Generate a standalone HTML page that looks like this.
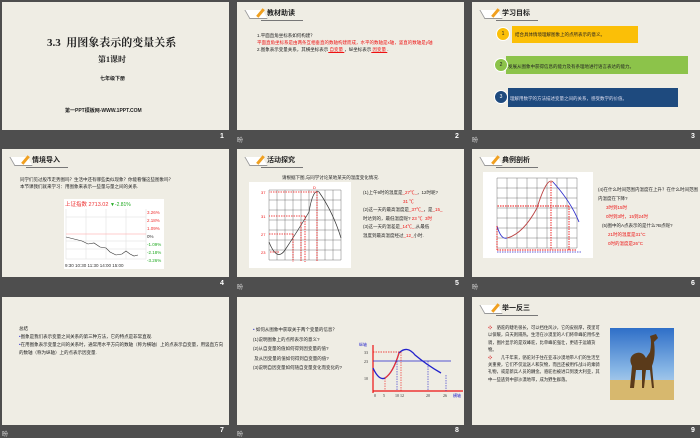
<!DOCTYPE html>
<html><head><meta charset="utf-8"><style>
*{margin:0;padding:0;box-sizing:border-box}
body{width:700px;height:438px;background:#4e4e4e;position:relative;overflow:hidden;font-family:"Liberation Sans","Noto Sans CJK SC",sans-serif;color:#222}
.s{position:absolute;width:227px;height:128px;background:#efede4;overflow:hidden}
.n{position:absolute;color:#fff;font-size:7px;font-weight:bold}
.ic{position:absolute;color:#ddd;font-size:6px}
.hd{position:absolute;left:10px;top:5px;height:14px;width:60px}
.hd .b{position:absolute;left:0;top:3px;width:18px;height:9px;border-left:1px solid #999;border-bottom:1px solid #999;transform:skewX(30deg);background:#fff}
.hd .p{position:absolute;left:12px;top:1px;width:3px;height:10px;background:#f0a020;transform:rotate(40deg)}
.hd .t{position:absolute;left:20px;top:1px;font-size:7px;font-weight:bold;color:#222}
.hd .u{position:absolute;left:14px;top:13px;width:42px;height:1px;background:#777}
.tx{position:absolute;font-size:4.5px;line-height:7px;color:#222}
.r{color:#e11}
</style></head><body>

<!-- Slide 1 -->
<div class="s" style="left:2px;top:2px">
<div style="position:absolute;left:45px;top:32px;font-size:11px;font-weight:bold;font-family:'Liberation Serif','Noto Serif CJK SC',serif">3.3&nbsp; 用图象表示的变量关系</div>
<div style="position:absolute;left:96px;top:52px;font-size:8px;font-weight:bold;font-family:'Liberation Serif','Noto Serif CJK SC',serif">第1课时</div>
<div style="position:absolute;left:98px;top:73px;font-size:5px;font-weight:bold">七年级下册</div>
<div style="position:absolute;left:63px;top:105px;font-size:5px;font-weight:bold">第一PPT模板网-WWW.1PPT.COM</div>
</div>
<div class="n" style="left:220px;top:133px">1</div>

<!-- Slide 2 -->
<div class="s" style="left:237px;top:2px">
<div class="hd"><div class="b"></div><div class="p"></div><div class="t">教材助读</div><div class="u"></div></div>
<div class="tx" style="left:20px;top:30px;width:200px">1.平面直角坐标系如何构建？<br><span class="r">平面直角坐标系是由两条互相垂直的数轴构建而成，水平的数轴是x轴，竖直的数轴是y轴</span><br>2.图象表示变量关系，其横坐标表示<span class="r" style="text-decoration:underline">&nbsp;自变量&nbsp;</span>，纵坐标表示<span class="r" style="text-decoration:underline">&nbsp;因变量&nbsp;</span>.</div>
</div>
<div class="ic" style="left:237px;top:135px">昐</div>
<div class="n" style="left:455px;top:133px">2</div>

<!-- Slide 3 -->
<div class="s" style="left:472px;top:2px;width:228px">
<div class="hd"><div class="b"></div><div class="p"></div><div class="t">学习目标</div><div class="u"></div></div>
<div style="position:absolute;left:40px;top:24px;width:126px;height:17px;background:#fbbf07"></div>
<div style="position:absolute;left:24px;top:25px;width:14px;height:14px;border-radius:50%;background:#fbbf07;border:1px solid #fff;font-size:5px;text-align:center;line-height:12px">1</div>
<div class="tx" style="left:43px;top:29px">结合具体情境理解图象上的点所表示的意义。</div>
<div style="position:absolute;left:34px;top:54px;width:182px;height:18px;background:#8cc34a"></div>
<div style="position:absolute;left:22px;top:56px;width:14px;height:14px;border-radius:50%;background:#8cc34a;border:1px solid #fff;font-size:5px;text-align:center;line-height:12px">2</div>
<div class="tx" style="left:36px;top:61px">发展从图象中获得信息的能力及有条理地进行语言表达的能力。</div>
<div style="position:absolute;left:36px;top:86px;width:170px;height:19px;background:#1e4a7e"></div>
<div style="position:absolute;left:22px;top:88px;width:14px;height:14px;border-radius:50%;background:#1e4a7e;border:1px solid #fff;font-size:5px;text-align:center;line-height:12px;color:#fff">3</div>
<div class="tx" style="left:38px;top:93px;color:#dde">理解用数学的方法描述变量之间的关系，感受数学的价值。</div>
</div>
<div class="ic" style="left:472px;top:135px">昐</div>
<div class="n" style="left:691px;top:133px">3</div>

<!-- Slide 4 -->
<div class="s" style="left:2px;top:149px">
<div class="hd"><div class="b"></div><div class="p"></div><div class="t">情境导入</div><div class="u"></div></div>
<div class="tx" style="left:18px;top:27px;width:205px">同学们见过股市走势图吗？生活中还有哪些类似现象？你能看懂这些图象吗？<br>本节课我们就来学习：用图象来表示一些量与量之间的关系.</div>
<div style="position:absolute;left:62px;top:50px;width:100px;height:70px;background:#fff"></div>
<div style="position:absolute;left:63px;top:51px;font-size:5.5px;color:#e33">上证指数 2713.02 <span style="color:#2a2;font-size:5px">▼-2.81%</span></div>
<svg style="position:absolute;left:62px;top:58px" width="100" height="62">
<g stroke="#ddd" stroke-width=".5"><line x1="2" y1="2" x2="2" y2="52"/><line x1="22" y1="2" x2="22" y2="52"/><line x1="42" y1="2" x2="42" y2="52"/><line x1="62" y1="2" x2="62" y2="52"/><line x1="82" y1="2" x2="82" y2="52"/><line x1="2" y1="52" x2="82" y2="52"/><line x1="2" y1="10" x2="82" y2="10"/><line x1="2" y1="34" x2="82" y2="34"/><line x1="2" y1="42" x2="82" y2="42"/></g>
<line x1="2" y1="27" x2="82" y2="27" stroke="#f99" stroke-width=".6"/>
<polyline fill="none" stroke="#333" stroke-width=".6" points="2,30 10,32 18,34 24,37 30,36 36,40 42,41 46,45 52,48 58,47 62,44 66,47 70,49 74,48"/>
<g font-size="4.5" font-family="Liberation Sans"><text x="83" y="7" fill="#e33">3.26%</text><text x="83" y="15" fill="#e33">2.18%</text><text x="83" y="23" fill="#e33">1.09%</text><text x="83" y="31" fill="#333">0%</text><text x="83" y="39" fill="#2a2">-1.09%</text><text x="83" y="47" fill="#2a2">-2.18%</text><text x="83" y="55" fill="#2a2">-3.26%</text><text x="1" y="60" fill="#333">9:30  10:30  11:30  14:00  15:00</text></g>
</svg>
</div>
<div class="n" style="left:220px;top:280px">4</div>

<!-- Slide 5 -->
<div class="s" style="left:237px;top:149px">
<div class="hd"><div class="b"></div><div class="p"></div><div class="t">活动探究</div><div class="u"></div></div>
<div class="tx" style="left:45px;top:25px">请根据下图,与同学讨论某地某天的温度变化情况.</div>
<svg style="position:absolute;left:12px;top:33px" width="102" height="86">
<rect x="0" y="0" width="102" height="86" fill="#fff"/>
<g stroke="#555" stroke-width=".4">
<line x1="20" y1="8" x2="20" y2="78"/><line x1="28" y1="8" x2="28" y2="78"/><line x1="36" y1="8" x2="36" y2="78"/><line x1="44" y1="8" x2="44" y2="78"/><line x1="52" y1="8" x2="52" y2="78"/><line x1="60" y1="8" x2="60" y2="78"/><line x1="68" y1="8" x2="68" y2="78"/><line x1="76" y1="8" x2="76" y2="78"/><line x1="84" y1="8" x2="84" y2="78"/><line x1="92" y1="8" x2="92" y2="78"/>
<line x1="20" y1="8" x2="92" y2="8"/><line x1="20" y1="18" x2="92" y2="18"/><line x1="20" y1="28" x2="92" y2="28"/><line x1="20" y1="38" x2="92" y2="38"/><line x1="20" y1="48" x2="92" y2="48"/><line x1="20" y1="58" x2="92" y2="58"/><line x1="20" y1="68" x2="92" y2="68"/><line x1="20" y1="78" x2="92" y2="78"/></g>
<path d="M20,60 Q28,80 36,68 Q48,50 60,30 Q64,6 70,10 Q84,30 92,56" fill="none" stroke="#333" stroke-width=".7"/>
<g stroke="#e11" stroke-width=".8" stroke-dasharray="1.5,1" fill="none"><line x1="68" y1="10" x2="20" y2="10"/><line x1="56" y1="34" x2="20" y2="34"/><line x1="44" y1="52" x2="20" y2="52"/><line x1="30" y1="70" x2="20" y2="70"/><line x1="68" y1="10" x2="68" y2="80"/><line x1="56" y1="34" x2="56" y2="80"/><line x1="44" y1="52" x2="44" y2="80"/><line x1="52" y1="40" x2="52" y2="80"/></g>
<g font-size="4" fill="#e11" font-family="Liberation Sans"><text x="64" y="7">D</text><text x="12" y="12">37</text><text x="12" y="36">31</text><text x="12" y="54">27</text><text x="12" y="72">23</text></g>
</svg>
<div class="tx" style="left:126px;top:40px;width:100px;line-height:8.5px">(1)上午9时的温度是<span class="r">_27℃_</span>，12时呢?<br><span class="r" style="margin-left:40px">31 ℃</span><br>(2)这一天的最高温度是<span class="r">_37℃_</span>，是<span class="r">_15_</span><br>时达到的，最低温度呢? <span class="r">23 ℃ &nbsp;3时</span><br>(3)这一天的温差是<span class="r">_14℃_</span>,从最低<br>温度到最高温度经过<span class="r">_12_</span>小时.</div>
</div>
<div class="ic" style="left:237px;top:282px">昐</div>
<div class="n" style="left:455px;top:280px">5</div>

<!-- Slide 6 -->
<div class="s" style="left:472px;top:149px;width:228px">
<div class="hd"><div class="b"></div><div class="p"></div><div class="t">典例剖析</div><div class="u"></div></div>
<svg style="position:absolute;left:11px;top:23px" width="110" height="86">
<rect x="0" y="0" width="110" height="86" fill="#fff"/>
<g stroke="#555" stroke-width=".4">
<line x1="14" y1="6" x2="14" y2="76"/><line x1="24" y1="6" x2="24" y2="76"/><line x1="34" y1="6" x2="34" y2="76"/><line x1="44" y1="6" x2="44" y2="76"/><line x1="54" y1="6" x2="54" y2="76"/><line x1="64" y1="6" x2="64" y2="76"/><line x1="74" y1="6" x2="74" y2="76"/><line x1="84" y1="6" x2="84" y2="76"/><line x1="94" y1="6" x2="94" y2="76"/>
<line x1="14" y1="6" x2="94" y2="6"/><line x1="14" y1="16" x2="94" y2="16"/><line x1="14" y1="26" x2="94" y2="26"/><line x1="14" y1="36" x2="94" y2="36"/><line x1="14" y1="46" x2="94" y2="46"/><line x1="14" y1="56" x2="94" y2="56"/><line x1="14" y1="66" x2="94" y2="66"/><line x1="14" y1="76" x2="94" y2="76"/></g>
<path d="M14,54 Q18,68 24,66" fill="none" stroke="#33c" stroke-width=".9"/>
<path d="M24,66 Q40,62 54,36 Q64,4 70,10" fill="none" stroke="#b44" stroke-width=".9"/>
<path d="M70,10 Q88,30 96,50" fill="none" stroke="#33c" stroke-width=".9"/>
<g stroke="#e11" stroke-width=".9" stroke-dasharray="1.5,1" fill="none"><line x1="68" y1="10" x2="68" y2="78"/><line x1="86" y1="34" x2="86" y2="78"/><line x1="86" y1="34" x2="14" y2="34"/><line x1="14" y1="54" x2="14" y2="78"/><line x1="14" y1="78" x2="94" y2="78"/></g>
<line x1="14" y1="80" x2="98" y2="80" stroke="#33c" stroke-width=".8" stroke-dasharray="1.5,1"/>
</svg>
<div class="tx" style="left:126px;top:36px;width:100px;line-height:9px">(4)在什么时间范围内温度在上升？在什么时间范围内温度在下降?<br><span class="r" style="margin-left:8px">3时到15时</span><br><span class="r" style="margin-left:8px">0时到3时，15到24时</span><br><span style="margin-left:4px">(5)图中的A点表示的是什么?B点呢?</span><br><span class="r" style="margin-left:10px">21时的温度是31°C</span><br><span class="r" style="margin-left:10px">0时的温度是26°C</span></div>
</div>
<div class="ic" style="left:472px;top:282px">昐</div>
<div class="n" style="left:691px;top:280px">6</div>

<!-- Slide 7 -->
<div class="s" style="left:2px;top:297px">
<div class="tx" style="left:17px;top:28px;width:205px;line-height:8px">总结<br><span style="color:#33c">•</span>图象是我们表示变量之间关系的第三种方法，它的特点是非常直观.<br><span style="color:#33c">•</span>在用图象表示变量之间的关系时，通常用水平方向的数轴（称为横轴）上的点表示自变量，用竖直方向的数轴（称为纵轴）上的点表示因变量.</div>
</div>
<div class="ic" style="left:2px;top:429px">昐</div>
<div class="n" style="left:220px;top:427px">7</div>

<!-- Slide 8 -->
<div class="s" style="left:237px;top:297px">
<div class="tx" style="left:16px;top:28px;width:110px;line-height:9.5px"><span style="color:#33c">•</span> 如何从图象中获取关于两个变量的信息？<br>(1)说明图象上的点所表示的意义?<br>(2)从自变量的值如何得到因变量的值?<br>&nbsp;及从因变量的值如何得到自变量的值?<br>(3)说明自因变量如何随自变量变化而变化的?</div>
<svg style="position:absolute;left:118px;top:44px" width="112" height="58">
<line x1="18" y1="50" x2="108" y2="50" stroke="#e11" stroke-width="1.2"/>
<line x1="18" y1="52" x2="18" y2="4" stroke="#e11" stroke-width="1.2"/>
<path d="M18,27 Q24,40 30,37 Q38,32 44,12 Q52,4 60,14 Q72,24 86,32" fill="none" stroke="#22c" stroke-width="1.3"/>
<path d="M30,37 Q38,32 44,12" fill="none" stroke="#e33" stroke-width="1.3"/>
<line x1="18" y1="20" x2="96" y2="20" stroke="#22c" stroke-width=".8"/>
<line x1="18" y1="11" x2="46" y2="11" stroke="#e11" stroke-width=".7" stroke-dasharray="1.5,1"/>
<g stroke-dasharray="1.5,1" stroke-width=".6"><line x1="30" y1="37" x2="30" y2="50" stroke="#e11"/><line x1="42" y1="20" x2="42" y2="50" stroke="#22c"/><line x1="46" y1="11" x2="46" y2="50" stroke="#e11"/><line x1="73" y1="20" x2="73" y2="50" stroke="#22c"/><line x1="91" y1="34" x2="91" y2="50" stroke="#22c"/></g>
<g font-size="4" font-family="Liberation Serif" fill="#333"><text x="9" y="13">33</text><text x="9" y="22">23</text><text x="9" y="39">10</text><text x="19" y="56">0</text><text x="28" y="56">5</text><text x="40" y="56">10</text><text x="45" y="56">12</text><text x="71" y="56">20</text><text x="88" y="56">26</text><text x="98" y="56" fill="#22c">横轴</text><text x="4" y="5" fill="#22c">纵轴</text></g>
</svg>
</div>
<div class="ic" style="left:237px;top:429px">昐</div>
<div class="n" style="left:455px;top:427px">8</div>

<!-- Slide 9 -->
<div class="s" style="left:472px;top:297px;width:228px">
<div class="hd"><div class="b"></div><div class="p"></div><div class="t">举一反三</div><div class="u"></div></div>
<div class="tx" style="left:16px;top:27px;width:112px;line-height:7.4px;font-size:4.3px"><span style="color:#d44">❖</span>　骆驼的睫毛很长，可以挡住风沙，它的皮很厚，夜里可以保暖，白天则隔热。生活在沙漠里的人们将单峰驼用作坐骑，图片显示的是双峰驼，比单峰驼强壮，更适于运输货物。<br><span style="color:#d44">❖</span>　　几千年来，骆驼对于住在亚非沙漠地带人们的生活至关重要，它们不仅运送人和货物，而且还被用作战斗的乘骑礼物，或是新兵人员的酬金。骆驼也被进口到澳大利亚，其中一些逃到中部沙漠地带，成为野生群落。</div>
<svg style="position:absolute;left:138px;top:31px" width="64" height="72">
<defs><linearGradient id="sk" x1="0" y1="0" x2="0" y2="1"><stop offset="0" stop-color="#2f6fc8"/><stop offset=".6" stop-color="#8ab8e6"/><stop offset="1" stop-color="#cfe0ee"/></linearGradient></defs>
<rect width="64" height="72" fill="url(#sk)"/>
<rect y="52" width="64" height="20" fill="#d7b86e"/>
<path d="M20,60 L22,38 Q18,30 24,26 Q32,22 36,30 L40,24 Q42,14 40,8 L46,6 L48,10 L44,14 Q46,28 42,38 L44,60 L42,60 L40,42 L36,42 L34,60 L32,60 L32,42 L26,42 L24,60 Z" fill="#5a3a1a"/>
</svg>
</div>
<div class="n" style="left:691px;top:427px">9</div>
</body></html>
